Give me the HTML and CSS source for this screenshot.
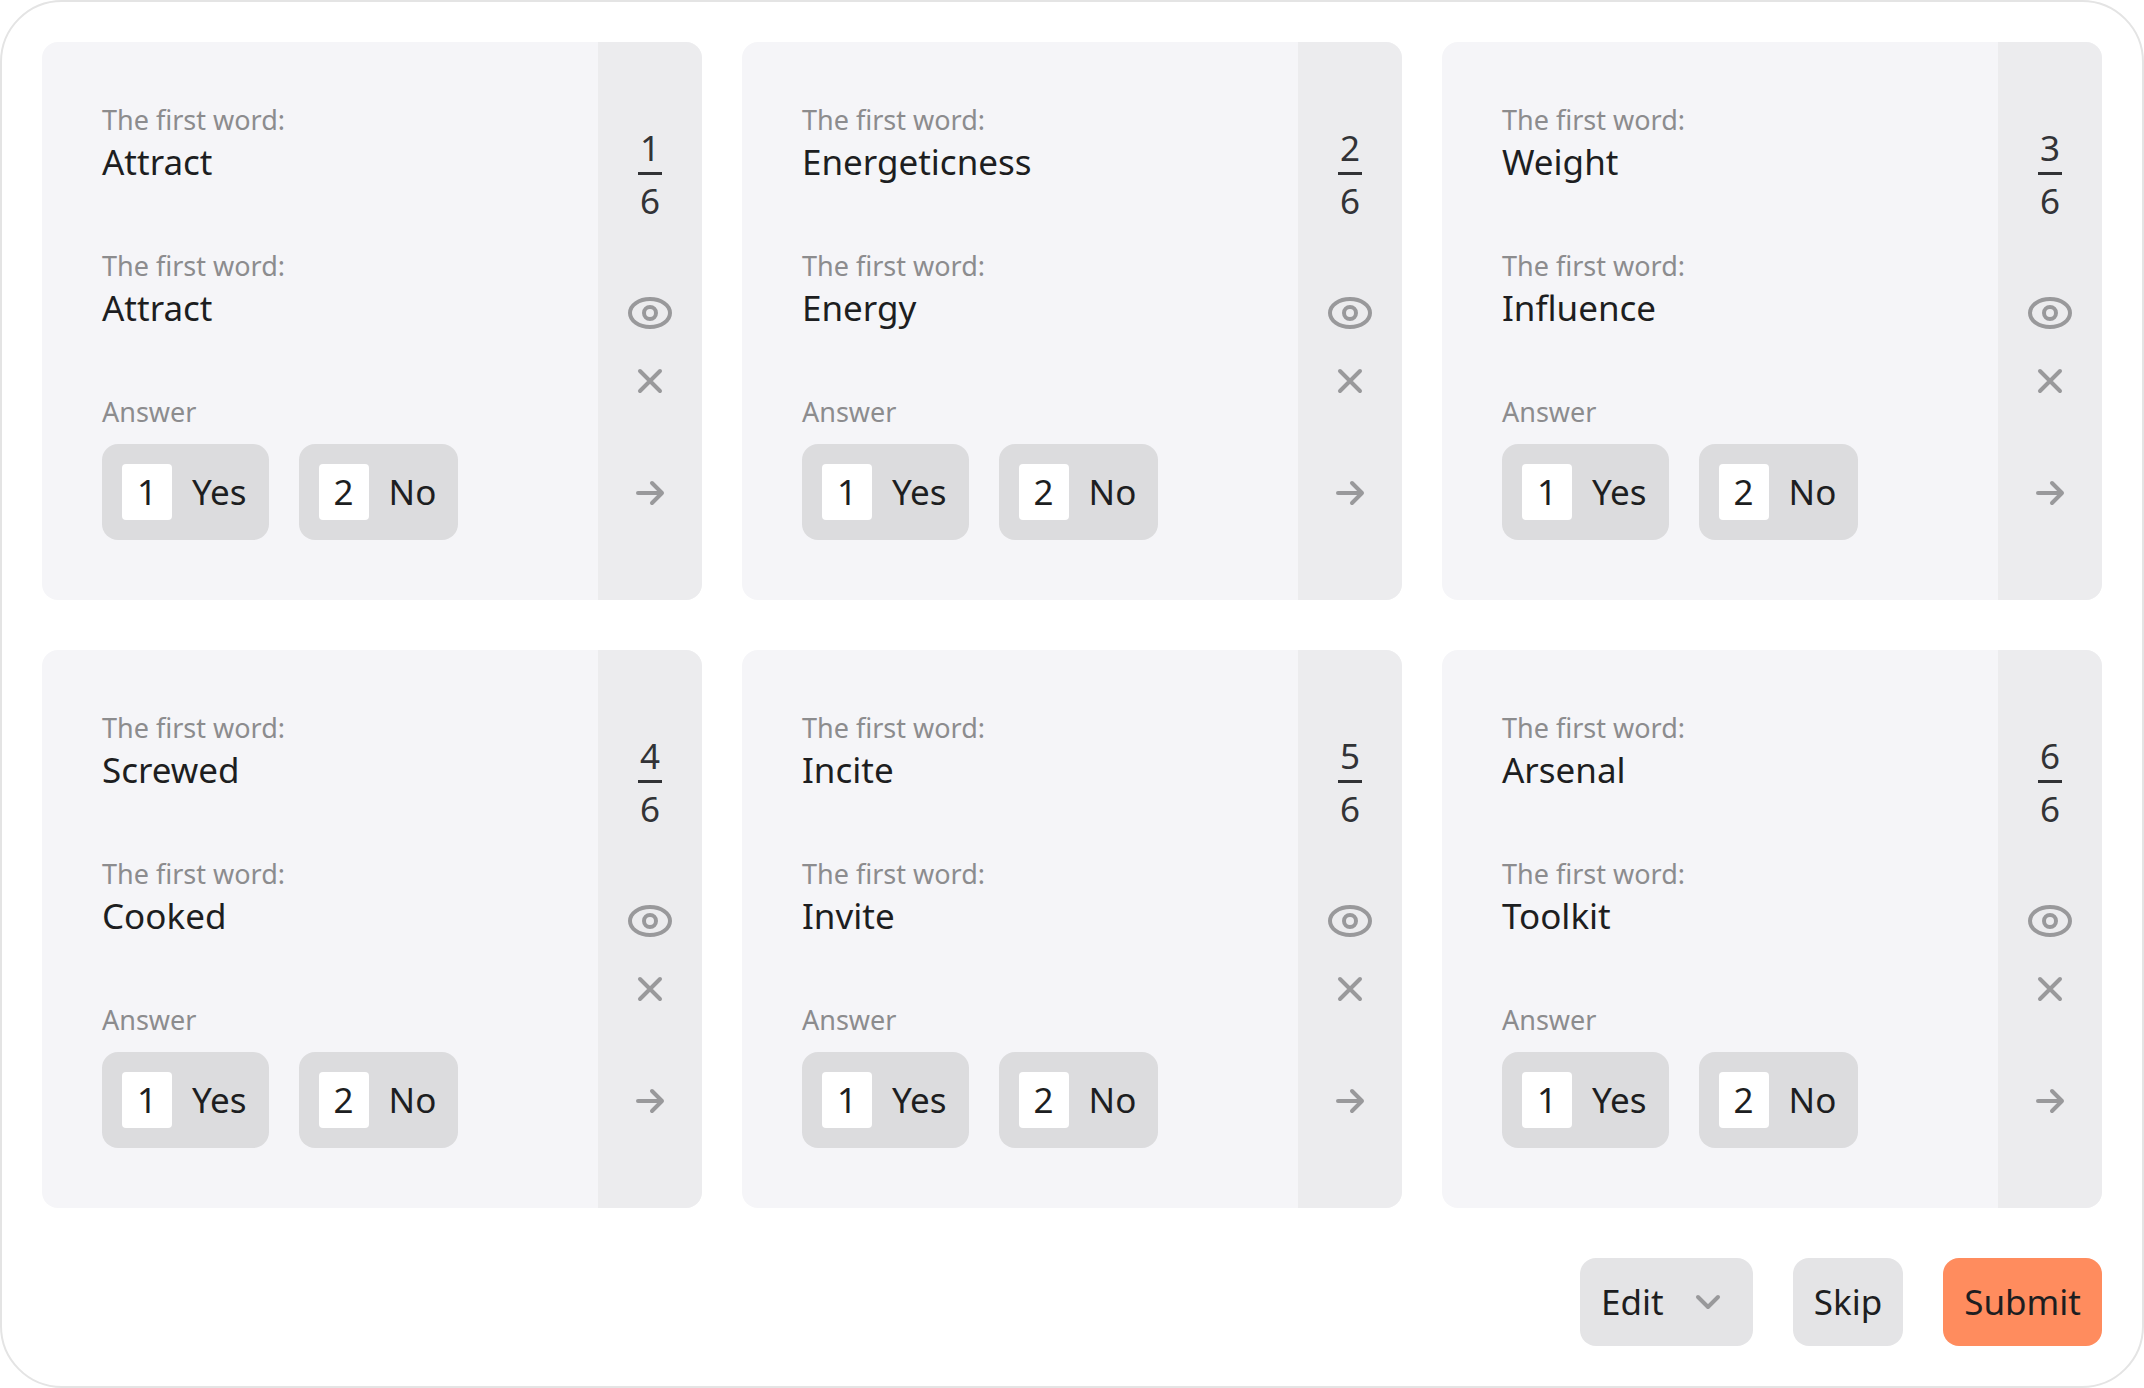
FILE: index.html
```html
<!DOCTYPE html>
<html lang="en">
  <head>
    <meta charset="utf-8">
    <meta name="viewport" content="width=device-width, initial-scale=1">
    <title>Word pairs</title>
    <link rel="stylesheet" href="styles.css">
  </head>
  <body>

    <!-- Icons -->
    <svg class="sprite" aria-hidden="true">
      <symbol id="icon-eye" viewBox="0 0 48 48">
        <ellipse cx="24" cy="24" rx="20" ry="14"/>
        <circle cx="24" cy="24" r="6"/>
      </symbol>
      <symbol id="icon-cross" viewBox="0 0 48 48">
        <path d="M14 14l20 20M34 14L14 34"/>
      </symbol>
      <symbol id="icon-arrow" viewBox="0 0 48 48">
        <path d="M12 24h24M26 14l10 10-10 10"/>
      </symbol>
      <symbol id="icon-chevron" viewBox="0 0 48 48">
        <path d="M14 19l10 10 10-10"/>
      </symbol>
    </svg>

    <main class="panel">
      <div class="cards" id="cards"></div>

      <div class="actions">
        <button class="button" type="button" aria-haspopup="menu">
          Edit
          <svg class="icon"><use href="#icon-chevron"/></svg>
        </button>
        <button class="button" type="button">Skip</button>
        <button class="button type-submit" type="submit">Submit</button>
      </div>
    </main>

    <template id="card-template">
      <article class="card">
        <div class="card__body">
          <div class="card__field">
            <div class="card__label">The first word:</div>
            <div class="card__word"></div>
          </div>
          <div class="card__field">
            <div class="card__label">The first word:</div>
            <div class="card__word"></div>
          </div>
          <div class="card__field">
            <div class="card__label">Answer</div>
            <div class="card__answers">
              <button class="answer" type="button"><kbd class="answer__key">1</kbd>Yes</button>
              <button class="answer" type="button"><kbd class="answer__key">2</kbd>No</button>
            </div>
          </div>
        </div>
        <div class="card__side">
          <div class="fraction">
            <span class="fraction__top"></span>
            <span class="fraction__bottom"></span>
          </div>
          <div class="card__tools">
            <button class="icon-button" type="button" aria-label="Show"><svg class="icon"><use href="#icon-eye"/></svg></button>
            <button class="icon-button" type="button" aria-label="Clear"><svg class="icon"><use href="#icon-cross"/></svg></button>
          </div>
          <button class="icon-button" type="button" aria-label="Next"><svg class="icon"><use href="#icon-arrow"/></svg></button>
        </div>
      </article>
    </template>

    <script>
      var pairs = [
        ['Attract', 'Attract'],
        ['Energeticness', 'Energy'],
        ['Weight', 'Influence'],
        ['Screwed', 'Cooked'],
        ['Incite', 'Invite'],
        ['Arsenal', 'Toolkit']
      ];

      var cards = document.getElementById('cards');
      var template = document.getElementById('card-template');

      pairs.forEach(function (pair, i) {
        var card = template.content.cloneNode(true);
        var words = card.querySelectorAll('.card__word');
        words[0].textContent = pair[0];
        words[1].textContent = pair[1];
        card.querySelector('.fraction__top').textContent = i + 1;
        card.querySelector('.fraction__bottom').textContent = pairs.length;
        cards.appendChild(card);
      });
    </script>

  </body>
</html>
```
FILE: styles.css
```css
* { box-sizing: border-box; }

body {
  margin: 0;
  background: #fff;
  color: #1d1e21;
  font: 35px/48px "Noto Sans", sans-serif;
}

button {
  border: 0;
  margin: 0;
  padding: 0;
  background: none;
  color: inherit;
  font: inherit;
  cursor: pointer;
}

.sprite { position: absolute; width: 0; height: 0; }

.icon {
  display: block;
  width: 48px;
  height: 48px;
  fill: none;
  stroke: #99999b;
  stroke-width: 4;
  stroke-linecap: round;
  stroke-linejoin: round;
}

.panel {
  display: flex;
  flex-direction: column;
  gap: 50px;
  padding: 40px;
  border: 2px solid #e4e4e4;
  border-radius: 62px;
}

.cards {
  display: grid;
  grid-template-columns: repeat(3, 1fr);
  gap: 50px 40px;
}

/* Card */
.card {
  display: flex;
  background: #f5f5f8;
  border-radius: 16px;
  overflow: hidden;
}

.card__body {
  flex: 1;
  display: flex;
  flex-direction: column;
  gap: 62px;
  padding: 60px;
}

.card__label {
  color: #8c8c8e;
  font-size: 27px;
  line-height: 36px;
}

.card__answers {
  display: flex;
  gap: 30px;
  padding-top: 14px;
}

.card__side {
  display: flex;
  flex-direction: column;
  align-items: center;
  gap: 64px;
  width: 104px;
  padding: 82px 0;
  background: #ececee;
}

.card__tools {
  display: grid;
  gap: 20px;
}

/* Answer button */
.answer {
  display: flex;
  align-items: center;
  gap: 20px;
  height: 96px;
  padding: 0 22px 0 20px;
  border-radius: 16px;
  background: #dcdcde;
}

.answer__key {
  width: 50px;
  border-radius: 4px;
  background: #fff;
  font: inherit;
  line-height: 56px;
}

/* Fraction */
.fraction {
  display: grid;
  color: #323336;
  text-align: center;
}

.fraction__top {
  width: 24px;
  border-bottom: 3px solid #323336;
}

.fraction__bottom { padding-top: 2px; }

/* Bottom buttons */
.actions {
  display: flex;
  justify-content: flex-end;
  gap: 40px;
}

.button {
  display: flex;
  align-items: center;
  gap: 20px;
  height: 88px;
  padding: 0 21px;
  border-radius: 16px;
  background: #e4e4e6;
}

.button.type-submit { background: #ff8c5e; }
```
